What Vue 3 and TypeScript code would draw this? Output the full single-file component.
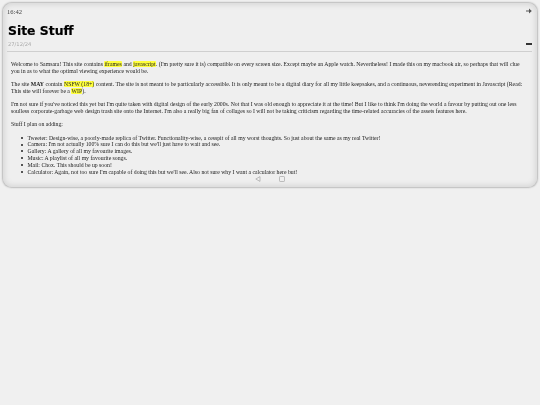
<script setup lang="ts">
const plans: string[] = [
  "Tweeter: Design-wise, a poorly-made replica of Twitter. Functionality-wise, a cesspit of all my worst thoughts. So just about the same as my real Twitter!",
  "Camera: I'm not actually 100% sure I can do this but we'll just have to wait and see.",
  "Gallery: A gallery of all my favourite images.",
  "Music: A playlist of all my favourite songs.",
  "Mail: Chox. This should be up soon!",
  "Calculator: Again, not too sure I'm capable of doing this but we'll see. Also not sure why I want a calculator here but!",
];
</script>

<template>
  <div class="page">
    <div class="device">
      <div class="status">
        <span>16:42</span>
        <svg class="pin" viewBox="0 0 6 6" width="6" height="6"><path d="M0 2.4H3V.6L5.8 3 3 5.4V3.6H0Z" fill="#555" /></svg>
      </div>
      <header class="head">
        <h1>Site Stuff</h1>
        <div class="meta">
          <span class="date">27/12/24</span>
          <span class="dash"></span>
        </div>
      </header>
      <main class="body">
        <p>Welcome to Samsara! This site contains <mark>iframes</mark> and <mark>javascript</mark>. (I'm pretty sure it is) compatible on every screen size. Except maybe an Apple watch. Nevertheless! I made this on my macbook air, so perhaps that will clue you in as to what the optimal viewing experience would be.</p>
        <p>The site <b>MAY</b> contain <mark>NSFW (18+)</mark> content. The site is not meant to be particularly accessible. It is only meant to be a digital diary for all my little keepsakes, and a continuous, neverending experiment in Javascript (Read: This site will forever be a <mark>WIP</mark>).</p>
        <p>I'm not sure if you've noticed this yet but I'm quite taken with digital design of the early 2000s. Not that I was old enough to appreciate it at the time! But I like to think I'm doing the world a favour by putting out one less soulless corporate-garbage web design trash site onto the Internet. I'm also a really big fan of collages so I will not be taking criticism regarding the time-related accuracies of the assets features here.</p>
        <p>Stuff I plan on adding:</p>
        <ul>
          <li v-for="item in plans" :key="item">{{ item }}</li>
        </ul>
      </main>
      <nav class="nav">
        <svg viewBox="0 0 6 6" width="6" height="6"><path d="M5 .6V5.4L.8 3Z" fill="none" stroke="#999" stroke-width=".6" /></svg>
        <svg viewBox="0 0 6 6" width="6" height="6"><rect x=".5" y=".5" width="5" height="5" rx=".8" fill="none" stroke="#999" stroke-width=".6" /></svg>
      </nav>
    </div>
  </div>
</template>

<style>
html, body { margin: 0; background: #f0f0f0; }
</style>

<style scoped>
.page {
  width: 540px;
  height: 405px;
  padding: 3px;
  box-sizing: border-box;
  background: #f0f0f0;
}
.device {
  height: 184px;
  box-sizing: border-box;
  padding: 4px 5px 5px 4px;
  border-radius: 9px;
  background: #efefef;
  box-shadow: 0 0 1.5px 0.5px #bdbdbd, inset 0 0 5px 2px #d8d8d8;
  display: flex;
  flex-direction: column;
  color: #222;
  font-family: "Liberation Serif", serif;
  filter: blur(0.4px);
}
.status {
  display: flex;
  justify-content: space-between;
  align-items: center;
  height: 8px;
  font-size: 6.6px;
  color: #444;
}
.head { padding: 8px 0 0 1px; border-bottom: 1px solid #cfcfcf; }
h1 {
  margin: 0;
  font: bold 12.4px/15px "DejaVu Sans", sans-serif;
  color: #000;
  -webkit-text-stroke: 0.2px #000;
}
.meta {
  display: flex;
  justify-content: space-between;
  align-items: center;
  height: 11px;
  padding-bottom: 2px;
  font: 5.2px "DejaVu Sans", sans-serif;
  color: #aaa;
}
.dash { width: 6px; height: 1.2px; background: #333; margin-top: 1px; }
.body {
  flex: 1;
  padding: 9px 4px 0 4px;
  font-size: 5.76px;
  line-height: 6.8px;
}
p { margin: 0 0 6.5px; }
mark { background: #ffff3c; color: inherit; padding: 0 .2px; border-radius: 1px; }
ul { margin: 0; padding: 0 0 0 16.5px; list-style: none; }
li::before {
  content: "";
  display: inline-block;
  width: 2px;
  height: 2px;
  margin: 0 4.3px .8px -6.3px;
  border-radius: 50%;
  background: #222;
}
.nav {
  display: flex;
  justify-content: center;
  gap: 18px;
  height: 6px;
}
</style>
